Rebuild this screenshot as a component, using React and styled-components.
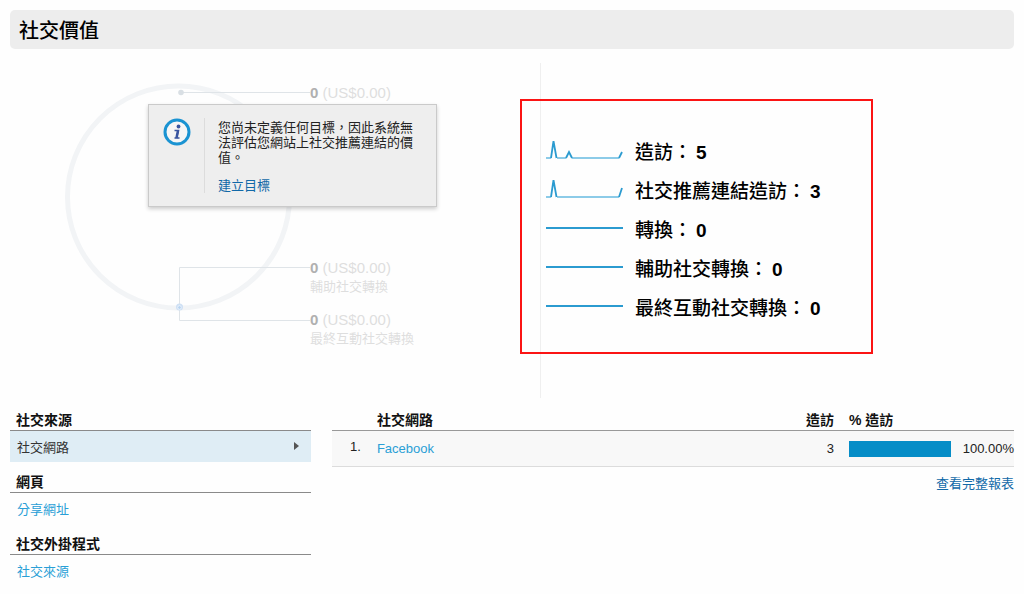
import React from 'react'
import styled, {createGlobalStyle} from 'styled-components'

const GlobalStyle = createGlobalStyle`
  * {
    box-sizing: border-box;
  }

  body {
    margin: 0;
    background: #fefefe;
    color: #222;
    font-family: "Liberation Sans", "Noto Sans CJK TC", sans-serif;
    font-size: 13px;
    line-height: 15px;
  }
`;

const Page = styled.main`
  padding: 10px;
`;

const TitleBar = styled.header`
  padding: 9px 9px 6px;
  border-radius: 5px;
  background: #ededed;
`;

const Title = styled.h1`
  margin: 0;
  font-size: 20px;
  line-height: 24px;
  font-weight: 500;
  color: #000;
`;

const Overview = styled.section`
  display: grid;
  grid-template-columns: 530fr 474fr;
  margin-top: 14px;
`;

/* the diagram is a free canvas: ring, connectors and their labels */
const Diagram = styled.div`
  position: relative;
  height: 335px;
`;

const Ring = styled.svg`
  display: block;
`;

const Label = styled.div`
  position: absolute;
  left: 300px;
  top: ${props => props.$top}px;
  color: #dedede;
  line-height: 19px;
`;

const Amount = styled.div`
  font-size: 15px;
  line-height: 19px;

  strong {
    color: #b0b0b0;
  }
`;

const Notice = styled.aside`
  position: absolute;
  left: 138px;
  top: 41px;
  width: 289px;
  display: flex;
  padding: 13px 14px;
  border: 1px solid #cacaca;
  background: #eee;
  box-shadow: 0 2px 4px rgba(0, 0, 0, 0.2);
`;

const NoticeIcon = styled.svg`
  flex: none;
  margin-right: 13px;
`;

const NoticeBody = styled.div`
  padding-left: 13px;
  border-left: 1px solid #dcdcdc;

  p {
    margin: 0 0 13px;
    padding-top: 2px;
  }
`;

const Link = styled.a`
  color: ${props => props.$dark ? '#1169a8' : '#2a9fd6'};
  text-decoration: none;
`;

const Metrics = styled.div`
  position: relative;
  border-left: 1px solid #efefef;
  padding: 70px 0 0 5px;
`;

const Highlight = styled.div`
  position: absolute;
  left: -21px;
  top: 36px;
  width: 353px;
  height: 255px;
  border: 2px solid #fb1414;
`;

const MetricList = styled.ul`
  margin: 0;
  padding: 0;
  list-style: none;
`;

const Metric = styled.li`
  display: flex;
  align-items: center;
  gap: 12px;
  height: 39px;
  font-size: 19px;
  line-height: 24px;
  font-weight: 500;
  color: #000;

  strong {
    margin-left: 4px;
  }
`;

const Reports = styled.section`
  display: grid;
  grid-template-columns: 30fr 68fr;
  gap: 21px;
  margin-top: 2px;
`;

const GroupTitle = styled.h2`
  margin: 0;
  height: 31px;
  padding: 12px 6px 0;
  border-bottom: 1px solid #8a8a8a;
  font-size: 14px;
  line-height: 16px;
  font-weight: bold;
  color: #111;
`;

const GroupItem = styled.a`
  display: flex;
  align-items: center;
  justify-content: space-between;
  height: 31px;
  padding: 2px 12px 0 7px;
  background: ${props => props.$active ? '#dfedf5' : 'none'};
  color: ${props => props.$active ? '#333' : '#2a9fd6'};
  text-decoration: none;

  svg {
    margin-bottom: 4px;
  }
`;

const Table = styled.table`
  width: 100%;
  table-layout: fixed;
  border-collapse: separate;
  border-spacing: 0;
`;

const Th = styled.th`
  height: 31px;
  width: ${props => props.$width || 'auto'};
  padding: 12px 0 2px;
  padding-left: ${props => props.$gap ? 15 : 0}px;
  border-bottom: 1px solid #999;
  font-size: 14px;
  line-height: 16px;
  text-align: ${props => props.$right ? 'right' : 'left'};
  color: #111;
`;

const Td = styled.td`
  height: 36px;
  padding: 0;
  padding-left: ${props => props.$gap ? 15 : 0}px;
  border-bottom: 1px solid #dcdcdc;
  background: #f8f8f8;
  text-align: ${props => props.$right ? 'right' : 'left'};
`;

const Index = styled.div`
  padding: 0 16px 4px 0;
`;

const Share = styled.div`
  display: flex;
  align-items: center;
  justify-content: space-between;
`;

const Track = styled.div`
  width: 102px;
`;

const Bar = styled.div`
  height: 16px;
  background: #058dc7;
`;

const More = styled.div`
  margin-top: 9px;
  text-align: right;
`;

const metrics = [
    {name: '造訪', value: 5, base: 'M0 17H5M11 17H20M26 17H73', peaks: 'M5 17L7.5 0L10.5 17M20 17L23 11L26 17M73 17L76 11'},
    {name: '社交推薦連結造訪', value: 3, base: 'M0 17H5M11 17H73', peaks: 'M5 17L7.5 0L10.5 17M73 17L76 8'},
    {name: '轉換', value: 0},
    {name: '輔助社交轉換', value: 0},
    {name: '最終互動社交轉換', value: 0},
];

const groups = [
    {title: '社交來源', item: '社交網路', active: true},
    {title: '網頁', item: '分享網址'},
    {title: '社交外掛程式', item: '社交來源'},
];

const rows = [
    {name: 'Facebook', visits: 3, share: 100},
];

const Sparkline = ({base, peaks}) => (
    <svg width="77" height="24" viewBox="0 0 77 24" fill="none" aria-hidden="true">
        {peaks ?
            <>
                <path d={base} stroke="#8ccbe8" strokeWidth="2"/>
                <path d={peaks} stroke="#2b9bd0" strokeWidth="1.8"/>
            </> :
            <path d="M0 9H77" stroke="#2b9bd0" strokeWidth="2"/>}
    </svg>
)

const ValueDiagram = () => (
    <Diagram>
        <Ring width="300" height="270" viewBox="0 0 300 270" fill="none" aria-hidden="true">
            <circle cx="168.5" cy="134" r="111" stroke="#f2f4f6" strokeWidth="5"/>
            <path d="M171 29.5H300M169.5 244V204.5H300M169.5 244V257.5H300" stroke="#dfe4e8"/>
            <circle cx="171" cy="29.5" r="2.8" fill="#d9dfe4"/>
            <circle cx="169.5" cy="244" r="3.5" fill="#cfe0f4"/>
            <circle cx="169.5" cy="244.5" r="1.8" fill="#b5d2f0" stroke="#eaf3fc"/>
        </Ring>
        <Label $top={20}>
            <Amount><strong>0</strong> (US$0.00)</Amount>
        </Label>
        <Label $top={195}>
            <Amount><strong>0</strong> (US$0.00)</Amount>
            輔助社交轉換
        </Label>
        <Label $top={247}>
            <Amount><strong>0</strong> (US$0.00)</Amount>
            最終互動社交轉換
        </Label>
        <Notice>
            <NoticeIcon width="28" height="28" viewBox="0 0 28 28" fill="none" aria-hidden="true">
                <circle cx="14" cy="14" r="12" fill="#f6f6f6" stroke="#1a93d2" strokeWidth="3"/>
                <circle cx="15.5" cy="8.5" r="1.9" fill="#3a55a0"/>
                <path d="M11.5 12.5H15.5L13.5 20H16.5M11.5 20H14" stroke="#3a55a0" strokeWidth="1.5"/>
                <path d="M15 12.5L13.5 20" stroke="#3a55a0" strokeWidth="2.5"/>
            </NoticeIcon>
            <NoticeBody>
                <p>您尚未定義任何目標，因此系統無法評估您網站上社交推薦連結的價值。</p>
                <Link href="#goal" $dark>建立目標</Link>
            </NoticeBody>
        </Notice>
    </Diagram>
)

const App = () => {
    return (
        <Page lang="zh-Hant">
            <GlobalStyle/>
            <TitleBar>
                <Title>社交價值</Title>
            </TitleBar>

            <Overview>
                <ValueDiagram/>
                <Metrics>
                    <Highlight/>
                    <MetricList>
                        {metrics.map((_metric) => (
                            <Metric key={_metric.name}>
                                <Sparkline base={_metric.base} peaks={_metric.peaks}/>
                                <span>{_metric.name}：<strong>{_metric.value}</strong></span>
                            </Metric>
                        ))}
                    </MetricList>
                </Metrics>
            </Overview>

            <Reports>
                <nav>
                    {groups.map((_group, i) => (
                        <div key={_group.title}>
                            <GroupTitle>{_group.title}</GroupTitle>
                            <GroupItem href={`#group${i}`} $active={_group.active}>
                                {_group.item}
                                {_group.active &&
                                    <svg width="5" height="8" viewBox="0 0 5 8" aria-hidden="true">
                                        <path d="M0 0L5 4L0 8Z" fill="#555"/>
                                    </svg>}
                            </GroupItem>
                        </div>
                    ))}
                </nav>
                <div>
                    <Table>
                        <thead>
                            <tr>
                                <Th $width="45px"/>
                                <Th>社交網路</Th>
                                <Th $width="120px" $right>造訪</Th>
                                <Th $width="180px" $gap>% 造訪</Th>
                            </tr>
                        </thead>
                        <tbody>
                            {rows.map((_row, i) => (
                                <tr key={_row.name}>
                                    <Td $right><Index>{i + 1}.</Index></Td>
                                    <Td><Link href="#facebook">{_row.name}</Link></Td>
                                    <Td $right>{_row.visits}</Td>
                                    <Td $gap>
                                        <Share>
                                            <Track>
                                                <Bar style={{width: `${_row.share}%`}}/>
                                            </Track>
                                            {_row.share.toFixed(2)}%
                                        </Share>
                                    </Td>
                                </tr>
                            ))}
                        </tbody>
                    </Table>
                    <More>
                        <Link href="#report" $dark>查看完整報表</Link>
                    </More>
                </div>
            </Reports>
        </Page>
    )
}

export default App
